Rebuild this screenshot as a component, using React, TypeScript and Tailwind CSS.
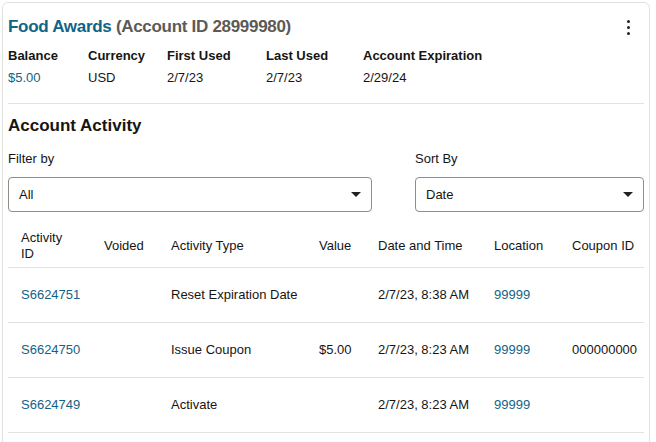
const rows = [
  { id: "S6624751", type: "Reset Expiration Date", value: "", date: "2/7/23, 8:38 AM", loc: "99999", coupon: "" },
  { id: "S6624750", type: "Issue Coupon", value: "$5.00", date: "2/7/23, 8:23 AM", loc: "99999", coupon: "000000000" },
  { id: "S6624749", type: "Activate", value: "", date: "2/7/23, 8:23 AM", loc: "99999", coupon: "" },
];

const cols = "grid grid-cols-[96px_67px_148px_59px_116px_78px_80px]";

function Caret() {
  return <span className="w-0 h-0 border-l-[5px] border-r-[5px] border-t-[5px] border-l-transparent border-r-transparent border-t-[#222]" />;
}

export default function App() {
  return (
    <div className="w-[656px] h-[442px] bg-white overflow-hidden pt-[2px] pl-[2px] text-[13px] text-[#161513]" style={{ fontFamily: "'Liberation Sans', Arial, sans-serif" }}>
      <div className="w-[648px] h-[460px] border border-[#e4e2df] rounded-md pl-[5px] pr-[5px]">
        <div className="flex items-center justify-between pt-[8px] h-[40px]">
          <h1 className="text-[17px] font-bold tracking-[-0.3px]">
            <span className="text-[#136385]">Food Awards</span>{" "}
            <span className="text-[#5c5a57]">(Account ID 28999980)</span>
          </h1>
          <div className="flex flex-col gap-[3px] items-center mr-[14px]">
            <span className="w-[3px] h-[3px] rounded-full bg-[#222]" />
            <span className="w-[3px] h-[3px] rounded-full bg-[#222]" />
            <span className="w-[3px] h-[3px] rounded-full bg-[#222]" />
          </div>
        </div>
        <div className="flex mt-[3px] pb-[15px] border-b border-[#e4e2df]">
          {[
            ["Balance", "$5.00", 80],
            ["Currency", "USD", 79],
            ["First Used", "2/7/23", 99],
            ["Last Used", "2/7/23", 97],
            ["Account Expiration", "2/29/24", 140],
          ].map(([l, v, w], i) => (
            <div key={l as string} style={{ width: w as number }}>
              <div className="font-bold leading-[20px]">{l}</div>
              <div className={`leading-[20px] mt-[2px] ${i === 0 ? "text-[#136385]" : ""}`}>{v}</div>
            </div>
          ))}
        </div>
        <h2 className="text-[17px] font-bold mt-[11px] leading-[22px]">Account Activity</h2>
        <div className="flex justify-between mt-[13px]">
          <div className="w-[364px]">
            <div className="leading-[18px]">Filter by</div>
            <div className="mt-[9px] h-[35px] border border-[#8f8d8a] rounded flex items-center justify-between px-[10px]">
              <span>All</span><Caret />
            </div>
          </div>
          <div className="w-[229px]">
            <div className="leading-[18px]">Sort By</div>
            <div className="mt-[9px] h-[35px] border border-[#8f8d8a] rounded flex items-center justify-between px-[10px]">
              <span>Date</span><Caret />
            </div>
          </div>
        </div>
        <div className="mt-[12px]">
          <div className={`${cols} h-[44px] items-center border-b border-[#e4e2df] font-normal`}>
            <div className="pl-[13px] leading-[16px]">Activity<br />ID</div>
            <div>Voided</div>
            <div>Activity Type</div>
            <div>Value</div>
            <div>Date and Time</div>
            <div>Location</div>
            <div className="whitespace-nowrap">Coupon ID</div>
          </div>
          {rows.map((r) => (
            <div key={r.id} className={`${cols} h-[55px] items-center border-b border-[#e4e2df]`}>
              <div className="pl-[13px] text-[#136385]">{r.id}</div>
              <div />
              <div>{r.type}</div>
              <div>{r.value}</div>
              <div className="whitespace-nowrap">{r.date}</div>
              <div className="text-[#136385]">{r.loc}</div>
              <div>{r.coupon}</div>
            </div>
          ))}
        </div>
      </div>
    </div>
  );
}
